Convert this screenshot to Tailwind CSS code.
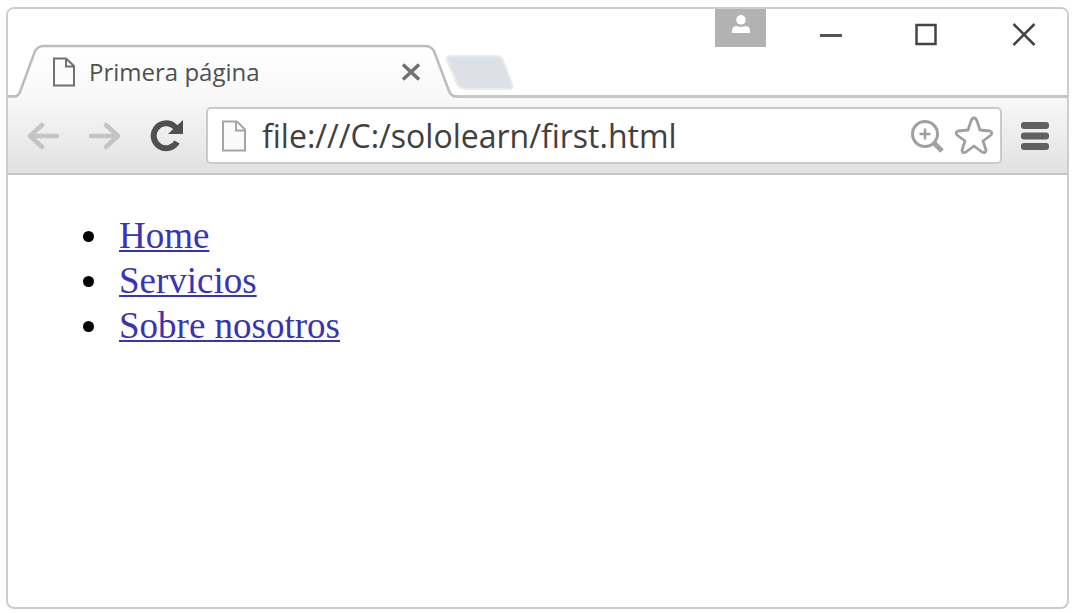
<!DOCTYPE html>
<html lang="es">
<head>
<meta charset="utf-8">
<meta name="viewport" content="width=device-width, initial-scale=1">
<title>Primera página</title>
<script src="https://cdn.jsdelivr.net/npm/@tailwindcss/browser@4"></script>
</head>
<body class="bg-white min-h-screen flex pt-[7px] pl-[6px] pr-[4px] pb-[4px] font-['Open_Sans','Noto_Sans',sans-serif]">
<div class="flex-1 flex flex-col border-2 border-[#cdcdcd] rounded-lg overflow-hidden bg-white">
  <header class="relative flex h-[89px] shrink-0 items-start border-b-3 border-[#c6c6c6] bg-white">
    <!-- active tab outline, covers the strip's bottom border -->
    <svg class="absolute left-0 top-[33px] w-[510px] h-[56px]" viewBox="0 0 510 56" fill="none" aria-hidden="true">
      <defs><linearGradient id="tab" x1="0" y1="0" x2="0" y2="1"><stop offset="0" stop-color="#ffffff"/><stop offset="1" stop-color="#f8f8f8"/></linearGradient></defs>
      <path d="M0 54H6Q10 54 12 50L27 9Q30 4 36 4H417Q423 4 425 8L441 50Q443 54 448 54V56H0Z" fill="url(#tab)"/>
      <path d="M0 54.500H6Q10 54.500 12 50L27 9Q30 4 36 4H417Q423 4 426 9L441 49Q443 54.500 449 54.500" stroke="#bcbcbc" stroke-width="2.500"/>
      <path d="M443 14H488Q493 14 495 18L504 42Q506 47 501 47H458Q452 47 449 42L439 18Q437 14 443 14Z" fill="#dde1e6" stroke="#e9ebed" stroke-width="2"/>
    </svg>
    <div class="relative flex items-center mt-[39px] ml-[44px] w-[369px] h-[48px]">
      <svg class="w-[24px] h-[30px]" viewBox="0 0 24 30" fill="none" stroke="#707070" stroke-width="2" aria-hidden="true"><path d="M2 1.500H14L22 9V28.500H2Z" fill="#fbfbfb"/><path d="M14 2V9.500H22" /></svg>
      <h1 class="ml-[13px] text-[24px] leading-[30px] text-[#505050] whitespace-nowrap">Primera página</h1>
      <button type="button" aria-label="Cerrar pestaña" class="ml-auto"><svg class="w-[20px] h-[18px]" viewBox="0 0 20 18" stroke="#707070" stroke-width="3.500" aria-hidden="true"><path d="M2 1.500L18 16.500M18 1.500L2 16.500"/></svg></button>
    </div>
    <div class="ml-auto flex items-start pr-[31px]">
      <button type="button" aria-label="Usuario" class="w-[51px] h-[38px] bg-[#b2b2b2] flex justify-center pt-[6px]"><svg class="w-[18px] h-[19px]" viewBox="0 0 18 19" fill="#fff" aria-hidden="true"><circle cx="9" cy="4.800" r="4.800"/><path d="M0 18V16Q0 11 5 11Q9 13 13 11Q18 11 18 16V18Z"/></svg></button>
      <button type="button" aria-label="Minimizar" class="ml-[54px] mt-[14px]"><svg class="w-[22px] h-[24px]" viewBox="0 0 22 24" stroke="#555" stroke-width="3" aria-hidden="true"><path d="M0 12.500H22"/></svg></button>
      <button type="button" aria-label="Maximizar" class="ml-[72px] mt-[14px]"><svg class="w-[24px] h-[24px]" viewBox="0 0 24 24" fill="none" stroke="#444" stroke-width="2.500" aria-hidden="true"><path d="M2.500 2H21.500V21H2.500Z"/></svg></button>
      <button type="button" aria-label="Cerrar" class="ml-[74px] mt-[14px]"><svg class="w-[24px] h-[24px]" viewBox="0 0 24 24" stroke="#444" stroke-width="2.500" aria-hidden="true"><path d="M1.500 1L22.500 22M22.500 1L1.500 22"/></svg></button>
    </div>
  </header>
  <nav class="flex items-center h-[77px] shrink-0 pl-[18px] pr-[17px] border-b-2 border-[#c4c4c4] bg-linear-to-b from-[#f8f8f8] to-[#e1e1e1]">
    <button type="button" aria-label="Atrás"><svg class="w-[34px] h-[30px]" viewBox="0 0 34 30" fill="none" stroke="#c4c4c4" stroke-width="4.500" stroke-linecap="round" stroke-linejoin="round" aria-hidden="true"><path d="M31 15H5M16 4L4 15L16 26"/></svg></button>
    <button type="button" aria-label="Adelante" class="ml-[28px]"><svg class="w-[34px] h-[30px]" viewBox="0 0 34 30" fill="none" stroke="#c4c4c4" stroke-width="4.500" stroke-linecap="round" stroke-linejoin="round" aria-hidden="true"><path d="M3 15H29M18 4L30 15L18 26"/></svg></button>
    <button type="button" aria-label="Recargar" class="ml-[28px]"><svg class="w-[34px] h-[34px]" viewBox="0 0 34 34" fill="none" aria-hidden="true"><path d="M27 23A12.500 12.500 0 1 1 24 7L27 10" stroke="#505050" stroke-width="6"/><path d="M33 1V15H18Z" fill="#505050"/></svg></button>
    <div class="flex flex-1 min-w-0 items-center ml-[22px] h-[57px] border-2 border-[#cacaca] rounded-[5px] bg-white pl-[13px] pr-[6px]">
      <svg class="shrink-0 w-[26px] h-[32px]" viewBox="0 0 26 32" fill="none" stroke="#a5a5a5" stroke-width="2" aria-hidden="true"><path d="M2 1.500H16L24 9.500V30.500H2Z" fill="#fafafa"/><path d="M15 2V10.500H24"/></svg>
      <input type="text" aria-label="Dirección" value="file:///C:/sololearn/first.html" class="ml-[15px] flex-1 min-w-0 text-[32px] leading-[44px] text-[#404040] outline-none">
      <button type="button" aria-label="Zoom"><svg class="w-[34px] h-[34px]" viewBox="0 0 34 34" fill="none" stroke="#a0a0a0" aria-hidden="true"><circle cx="15" cy="15" r="12.500" stroke-width="3"/><path d="M15 9.500V20.500M9.500 15H20.500" stroke-width="2.500"/><path d="M24 24L32 32" stroke-width="5"/></svg></button>
      <button type="button" aria-label="Favorito" class="ml-[10px]"><svg class="w-[40px] h-[40px]" viewBox="0 0 40 40" fill="#fff" stroke="#a0a0a0" stroke-width="2.800" stroke-linejoin="round" aria-hidden="true"><path d="M20 2Q22 2 23 5L26 14L36 15Q39 16 37 19L29 25L32 34Q32 38 28 36L20 30L12 36Q8 38 8 34L11 25L3 19Q1 16 4 15L14 14L17 5Q18 2 20 2Z"/></svg></button>
    </div>
    <button type="button" aria-label="Menú" class="ml-[18px]"><svg class="w-[30px] h-[30px]" viewBox="0 0 30 30" fill="#606060" aria-hidden="true"><rect x="1" y="1" width="28" height="7" rx="3"/><rect x="1" y="11.500" width="28" height="7" rx="3"/><rect x="1" y="22" width="28" height="7" rx="3"/></svg></button>
  </nav>
  <main class="flex-1 pt-[38px] font-['Liberation_Serif',serif] text-[37px] leading-[45px]">
    <ul class="list-disc pl-[104px] text-black">
      <li><a href="#" class="pl-[7px] text-[#3933b5] underline decoration-2 underline-offset-2">Home</a></li>
      <li><a href="#" class="pl-[7px] text-[#3933b5] underline decoration-2 underline-offset-2">Servicios</a></li>
      <li><a href="#" class="pl-[7px] text-[#3933b5] underline decoration-2 underline-offset-2">Sobre nosotros</a></li>
    </ul>
  </main>
</div>
</body>
</html>
